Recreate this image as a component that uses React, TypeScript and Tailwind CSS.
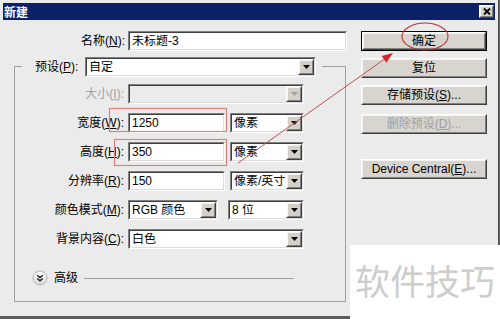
import React from "react";

const raised =
  "border border-t-white border-l-white border-r-[#404040] border-b-[#404040]";
const raisedInner =
  "border border-t-[#f4f4f4] border-l-[#f4f4f4] border-r-[#808080] border-b-[#808080]";

function Arrow({ dim }: { dim?: boolean }) {
  return (
    <div className={`w-[16px] h-full shrink-0 bg-[#d4d0c8] ${raised}`}>
      <div className={`h-full flex items-center justify-center ${raisedInner}`}>
        <svg width="7" height="4" viewBox="0 0 7 4">
          <path d="M0 0H7L3.5 4Z" fill={dim ? "#a0a0a0" : "#000"} />
        </svg>
      </div>
    </div>
  );
}

function Box({
  w,
  children,
  select,
  disabled,
}: {
  w: string;
  children?: React.ReactNode;
  select?: boolean;
  disabled?: boolean;
}) {
  return (
    <div
      className={`${w} h-[20px] shrink-0 border border-t-[#808080] border-l-[#808080] border-r-white border-b-white`}
    >
      <div
        className={`h-full flex items-center border border-t-[#404040] border-l-[#404040] border-r-[#dcdcdc] border-b-[#dcdcdc] ${
          disabled ? "bg-[#ebebeb]" : "bg-white"
        }`}
      >
        <span className="flex-1 pl-[2px] whitespace-nowrap overflow-hidden">{children}</span>
        {select && <Arrow dim={disabled} />}
      </div>
    </div>
  );
}

function Button({
  children,
  isDefault,
  disabled,
}: {
  children: React.ReactNode;
  isDefault?: boolean;
  disabled?: boolean;
}) {
  return (
    <div className={`w-[126px] h-[20px] ${isDefault ? "border border-black" : ""}`}>
      <div className={`h-full bg-[#d8d5d0] ${raised}`}>
        <div
          className={`h-full flex items-center justify-center ${raisedInner} ${
            disabled ? "text-[#a0a0a0]" : "text-black"
          }`}
        >
          {children}
        </div>
      </div>
    </div>
  );
}

function Row({
  label,
  children,
  dim,
}: {
  label: React.ReactNode;
  children: React.ReactNode;
  dim?: boolean;
}) {
  return (
    <div className="flex items-center h-[20px]">
      <div
        className={`w-[110px] text-right pr-[1px] whitespace-nowrap ${
          dim ? "text-[#a0a0a0]" : "text-black"
        }`}
      >
        {label}
      </div>
      <div className="ml-[3px] flex items-center">{children}</div>
    </div>
  );
}

export default function App() {
  return (
    <div className="w-[500px] h-[319px] relative overflow-hidden bg-[#5e5e5e] font-['Liberation_Sans','Noto_Sans_CJK_SC',sans-serif] text-[12px] leading-none">
      <div className="w-[499px] h-[316px] bg-[#ebebeb] p-[3px] border-r border-r-[#505050] flex flex-col">
        {/* title bar */}
        <div className="h-[17px] bg-[#0c2268] flex items-center justify-between pl-[1px] pr-[1px]">
          <span className="text-white font-bold text-[12px] font-['Noto_Sans_CJK_SC',sans-serif]">新建</span>
          <div className={`w-[15px] h-[13px] bg-[#d4d0c8] ${raised}`}>
            <div className={`h-full flex items-center justify-center ${raisedInner}`}>
              <svg width="8" height="7" viewBox="0 0 8 7">
                <path d="M1 0.5L7 6.5M7 0.5L1 6.5" stroke="#000" strokeWidth="1.8" />
              </svg>
            </div>
          </div>
        </div>

        <div className="flex">
          {/* left column */}
          <div className="w-[350px] pt-[11px]">
            <div className="flex items-center h-[20px]">
              <div className="w-[122px] text-right whitespace-nowrap">
                名称(<u>N</u>):
              </div>
              <div className="ml-[3px]">
                <Box w="w-[219px]">未标题-3</Box>
              </div>
            </div>

            <div className="ml-[11px] w-[332px] mt-[6px]">
              <div className="flex h-[20px] items-center">
                <div className="w-[8px] h-[11px] self-end border-t border-l border-[#a0a0a0]" />
                <div className="w-[13px]" />
                <div className="w-[48px] whitespace-nowrap">
                  预设(<u>P</u>):
                </div>
                <div className="ml-[2px]">
                  <Box w="w-[231px]" select>
                    自定
                  </Box>
                </div>
                <div className="w-[6px]" />
                <div className="flex-1 h-[11px] self-end border-t border-r border-[#a0a0a0]" />
              </div>

              <div className="h-[225px] border-l border-r border-b border-[#a0a0a0] pt-[7px] flex flex-col gap-[9px]">
                <Row label={<>大小(<u>I</u>):</>} dim>
                  <Box w="w-[176px]" select disabled />
                </Row>
                <Row label={<>宽度(<u>W</u>):</>}>
                  <Box w="w-[97px]">1250</Box>
                  <div className="ml-[5px]">
                    <Box w="w-[74px]" select>
                      像素
                    </Box>
                  </div>
                </Row>
                <Row label={<>高度(<u>H</u>):</>}>
                  <Box w="w-[97px]">350</Box>
                  <div className="ml-[5px]">
                    <Box w="w-[74px]" select>
                      像素
                    </Box>
                  </div>
                </Row>
                <Row label={<>分辨率(<u>R</u>):</>}>
                  <Box w="w-[97px]">150</Box>
                  <div className="ml-[5px]">
                    <Box w="w-[74px]" select>
                      像素/英寸
                    </Box>
                  </div>
                </Row>
                <Row label={<>颜色模式(<u>M</u>):</>}>
                  <Box w="w-[90px]" select>
                    RGB 颜色
                  </Box>
                  <div className="ml-[10px]">
                    <Box w="w-[76px]" select>
                      8 位
                    </Box>
                  </div>
                </Row>
                <Row label={<>背景内容(<u>C</u>):</>}>
                  <Box w="w-[176px]" select>
                    白色
                  </Box>
                </Row>

                <div className="flex items-center h-[16px] mt-[12px] ml-[17px]">
                  <svg width="16" height="16" viewBox="0 0 16 16">
                    <defs>
                      <linearGradient id="adv" x1="0" y1="0" x2="0" y2="1">
                        <stop offset="0" stopColor="#ffffff" />
                        <stop offset="1" stopColor="#d6d6d6" />
                      </linearGradient>
                    </defs>
                    <circle cx="8" cy="8" r="7" fill="url(#adv)" stroke="#b4b4b4" />
                    <path
                      d="M5.3 5.2L8 7.6L10.7 5.2M5.3 8.4L8 10.8L10.7 8.4"
                      stroke="#202020"
                      strokeWidth="1.4"
                      fill="none"
                    />
                  </svg>
                  <span className="ml-[6px]">高级</span>
                  <div className="ml-[6px] w-[210px] border-t border-[#a0a0a0]" />
                </div>
              </div>
            </div>
          </div>

          {/* right column */}
          <div className="ml-[8px] pt-[11px] flex flex-col">
            <Button isDefault>确定</Button>
            <div className="mt-[7px]">
              <Button>复位</Button>
            </div>
            <div className="mt-[7px]">
              <Button>
                存储预设(<u>S</u>)...
              </Button>
            </div>
            <div className="mt-[9px]">
              <Button disabled>
                删除预设(<u>D</u>)...
              </Button>
            </div>
            <div className="mt-[25px]">
              <Button>
                Device Central(<u>E</u>)...
              </Button>
            </div>
          </div>
        </div>
      </div>

      {/* red annotations drawn over the screenshot */}
      <svg className="absolute inset-0 pointer-events-none" width="500" height="319">
        <rect x="109.5" y="108.5" width="117" height="23" fill="none" stroke="#dc8080" strokeWidth="1.2" />
        <rect x="114.5" y="139.5" width="112" height="26" fill="none" stroke="#dc8080" strokeWidth="1.2" />
        <ellipse cx="425" cy="36.5" rx="23" ry="13.5" fill="none" stroke="#b83434" strokeWidth="1.1" />
        <line x1="238" y1="163" x2="386" y2="58" stroke="#c05050" strokeWidth="1" />
        <path d="M393 53L386.3 62.7L381.7 56.1Z" fill="#cc2a2a" />
      </svg>

      {/* watermark */}
      <div className="absolute left-[350px] top-[245px] w-[150px] h-[74px] bg-white pl-[5px] pt-[17px]">
        <span className="font-['Noto_Sans_CJK_SC',sans-serif] text-[35px] leading-none text-[#cdcdcd] whitespace-nowrap">
          软件技巧
        </span>
      </div>
    </div>
  );
}
